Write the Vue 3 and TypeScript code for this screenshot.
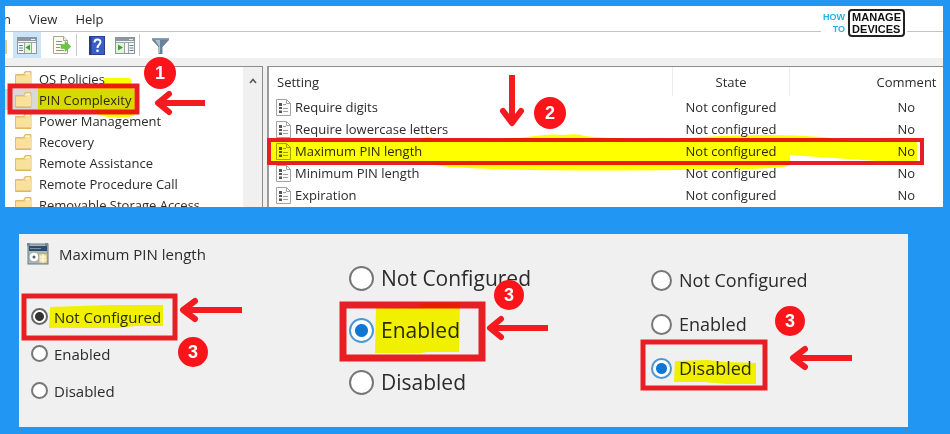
<script setup lang="ts">
import { reactive, ref } from 'vue'

interface Policy {
  name: string
  state: string
  comment: string
}

interface RadioSet {
  id: string
  title?: string
}

const folders: string[] = [
  'OS Policies',
  'PIN Complexity',
  'Power Management',
  'Recovery',
  'Remote Assistance',
  'Remote Procedure Call',
  'Removable Storage Access',
]
const selectedFolder = ref('PIN Complexity')

const policies: Policy[] = [
  { name: 'Require digits', state: 'Not configured', comment: 'No' },
  { name: 'Require lowercase letters', state: 'Not configured', comment: 'No' },
  { name: 'Maximum PIN length', state: 'Not configured', comment: 'No' },
  { name: 'Minimum PIN length', state: 'Not configured', comment: 'No' },
  { name: 'Expiration', state: 'Not configured', comment: 'No' },
]

const options: string[] = ['Not Configured', 'Enabled', 'Disabled']
const radioSets: RadioSet[] = [
  { id: 'small', title: 'Maximum PIN length' },
  { id: 'large' },
  { id: 'medium' },
]
const choice = reactive<Record<string, string>>({
  small: 'Not Configured',
  large: 'Enabled',
  medium: 'Disabled',
})
</script>

<template>
  <main class="page">
    <section class="card editor">
      <nav class="menu">
        <button type="button" class="cut">n</button>
        <button type="button">View</button>
        <button type="button">Help</button>
      </nav>
      <div class="logo">
        <div class="logo-how"><span>HOW</span><span>TO</span></div>
        <div class="logo-box"><span>MANAGE</span><span>DEVICES</span></div>
      </div>

      <div class="toolbar">
        <span class="sliver"></span>
        <button type="button" class="tool active" aria-label="Show or hide tree">
          <svg width="20" height="18" viewBox="0 0 20 18">
            <rect x="0.5" y="1.5" width="19" height="16" fill="#f4f6f6" stroke="#8b969c" />
            <rect x="1" y="2" width="18" height="3" fill="#8b98a3" />
            <path d="M14 3.5h4" stroke="#e8eef2" />
            <path d="M1 6.5h18M7.5 7v10M14.5 7v10" stroke="#9ba5aa" />
            <path d="M2 9.5h4M2 12h4M2 14.5h4" stroke="#6d7f90" />
            <rect x="8" y="7" width="6" height="10" fill="#e4f3da" />
            <path d="M13 8.500v6L8.500 11.500z" fill="#3ba32d" />
          </svg>
        </button>
        <button type="button" class="tool gap" aria-label="Export list">
          <svg width="20" height="20" viewBox="0 0 20 20">
            <path d="M1.500 1.500h10l4 4v13h-14z" fill="#fdfaee" stroke="#a8a596" />
            <path d="M11.500 1.500v4h4" fill="#eee" stroke="#a8a596" />
            <path d="M4 6.500h6M4 9.500h5M4 12.500h4M4 15.500h8" stroke="#8f9187" />
            <path d="M9 9.500h4V6.500l6 5-6 5v-3H9z" fill="#69c744" stroke="#4fae31" stroke-width="0.5" />
          </svg>
        </button>
        <span class="sep"></span>
        <button type="button" class="tool" aria-label="Help">
          <svg width="16" height="19" viewBox="0 0 16 19">
            <rect x="0.5" y="0.5" width="15" height="18" fill="#3a5fc4" stroke="#2a3f91" />
            <path d="M1.500 1v17" stroke="#23367f" stroke-width="2" />
            <path d="M5.500 6.500c0-4 6-4 6-.5 0 2.500-3 2.500-3 6" fill="none" stroke="#fff" stroke-width="2" />
            <circle class="dot" cx="8.500" cy="14.800" r="1.300" fill="#fff" />
          </svg>
        </button>
        <button type="button" class="tool" aria-label="Show or hide action pane">
          <svg width="20" height="18" viewBox="0 0 20 18">
            <rect x="0.5" y="1.5" width="19" height="16" fill="#f4f6f6" stroke="#8b969c" />
            <rect x="1" y="2" width="18" height="3" fill="#8b98a3" />
            <path d="M14 3.500h4" stroke="#e8eef2" />
            <path d="M1 6.500h18M9.500 7v10M13.500 7v10" stroke="#9ba5aa" />
            <path d="M14.500 9.500h4M14.500 12h4M14.500 14.500h4" stroke="#6d7f90" />
            <rect x="1" y="7" width="8" height="10" fill="#e4f3da" />
            <path d="M3 8.500v6l5-3z" fill="#3ba32d" />
          </svg>
        </button>
        <span class="sep"></span>
        <button type="button" class="tool" aria-label="Filter">
          <svg width="19" height="19" viewBox="0 0 19 19">
            <path d="M1 2h17v2l-6.500 7v7h-4v-7L1 4z" fill="#668397" />
            <path d="M4 4h5v13H8v-7z" fill="#a9c0ce" />
            <path d="M1 2h17v1.500H1z" fill="#8ba3b2" />
          </svg>
        </button>
      </div>

      <div class="panes">
        <div class="tree">
          <ul>
            <li v-for="folder in folders" :key="folder">
              <button
                type="button"
                class="folder"
                :class="{ selected: folder === selectedFolder }"
                @click="selectedFolder = folder"
              >
                <svg width="17" height="16" viewBox="0 0 17 16">
                  <path d="M.5 3.500h8l1.500-3h6v15H.5z" fill="#efcf7f" stroke="#dfbd6d" />
                  <path d="M11 1.500h4v2h-5z" fill="#fff5d6" />
                  <path d="M1 5h9.500l1-1.500H16V15H1z" fill="#f9e09c" />
                  <path d="M1 15h15" stroke="#d5b465" />
                </svg>
                <span>{{ folder }}</span>
              </button>
            </li>
          </ul>
          <div class="scroll">
            <svg width="8" height="6" viewBox="0 0 8 6">
              <path d="M1 5l3-3.500L7 5" fill="none" stroke="#555" stroke-width="1.5" />
            </svg>
          </div>
        </div>

        <div class="list">
          <table>
            <thead>
              <tr>
                <th class="name">Setting</th>
                <th class="state">State</th>
                <th class="comment">Comment</th>
              </tr>
            </thead>
            <tbody>
              <tr v-for="policy in policies" :key="policy.name">
                <td class="name">
                  <div class="policy">
                    <svg width="15" height="17" viewBox="0 0 15 17">
                      <path d="M.5.5h10l4 4v12H.5z" fill="#fbfbfb" stroke="#a3a3a3" />
                      <path d="M10.500.5v4h4" fill="none" stroke="#a3a3a3" />
                      <path d="M3 4h3v3H3zM3 8h3v2H3zM3 11.500h3v2.500H3z" fill="#555" />
                      <path d="M7 5.500h3M7 9.500h5M7 12.500h5" stroke="#a0a0a0" />
                    </svg>
                    <span>{{ policy.name }}</span>
                  </div>
                </td>
                <td class="state">{{ policy.state }}</td>
                <td class="comment">{{ policy.comment }}</td>
              </tr>
            </tbody>
          </table>
        </div>
      </div>

      <svg class="marks" viewBox="5 6 938 201" preserveAspectRatio="xMinYMin meet" aria-hidden="true">
        <g class="frame">
          <rect x="10" y="86" width="127" height="26" stroke-width="5" />
          <rect x="269" y="140" width="653" height="23" stroke-width="4" />
        </g>
        <g class="arrow">
          <path class="shaft" d="M205 103H160" />
          <path d="M169 94l-11 9 11 9" />
          <path class="shaft" d="M512 75v46" />
          <path d="M503 111l9 12 9-12" />
        </g>
        <circle cx="160" cy="73" r="16" />
        <text x="160" y="79">1</text>
        <circle cx="550" cy="113" r="16" />
        <text x="550" y="119">2</text>
      </svg>
      <svg class="marks ink" viewBox="5 6 938 201" preserveAspectRatio="xMinYMin meet" aria-hidden="true">
        <path d="M104 78h25q2 0 2 3v6l4 3v19l-1 7q-18 4-36-1l-3-6H38V88h66z" />
        <path
          d="M271 142h125l26 0q1-6 8-5l4 2q40 1 86-1 30-5 44-3 14-2 20 1 66 6 118 1 70-4 120 0l30 4 65 1v19l-8 3-32-3-87-6v10q-6 4-60 4-180 4-280-2l-40-5H271z"
        />
      </svg>
    </section>

    <section class="card dialog">
      <fieldset v-for="set in radioSets" :key="set.id" :class="set.id">
        <legend v-if="set.title" class="title">
          <svg width="22" height="22" viewBox="0 0 22 22">
            <rect x="1" y="1" width="20" height="20" fill="#a9b9bb" stroke="#667b84" />
            <path d="M0 0h3v3H0zM18 0h3v3h-3z" fill="#73899a" />
            <rect x="2" y="3" width="18" height="5" fill="#304b67" />
            <path d="M3 5.500h11" stroke="#7793ab" />
            <circle class="dot" cx="7" cy="14" r="5" fill="#fff" stroke="#93a3a7" />
            <circle class="dot" cx="7" cy="14" r="1.500" fill="#4f606b" />
            <rect x="12" y="11" width="8" height="9" fill="#f5dfa9" stroke="#ad9a6b" stroke-width="0.5" />
            <path d="M13 14h6M13 17h6M16 11v9" stroke="#fff9e4" />
          </svg>
          <span>{{ set.title }}</span>
        </legend>
        <label v-for="option in options" :key="option">
          <input v-model="choice[set.id]" type="radio" :name="set.id" :value="option" />
          <span>{{ option }}</span>
        </label>
      </fieldset>

      <svg class="marks" viewBox="19 234 889 193" preserveAspectRatio="xMinYMin meet" aria-hidden="true">
        <g class="frame">
          <rect x="24" y="296" width="151" height="42" stroke-width="5" />
          <rect x="343" y="305" width="139" height="53" stroke-width="7" />
          <rect x="643" y="342" width="122" height="46" stroke-width="5" />
        </g>
        <g class="arrow">
          <path class="shaft" d="M242 310h-57" />
          <path d="M195 301l-12 9 12 9" />
          <path class="shaft" d="M548 328h-57" />
          <path d="M501 319l-11 9 11 9" />
          <path class="shaft" d="M852 358h-57" />
          <path d="M805 349l-12 9 12 9" />
        </g>
        <circle cx="193" cy="352" r="15" />
        <text x="193" y="358">3</text>
        <circle cx="509" cy="295" r="15" />
        <text x="509" y="301">3</text>
        <circle cx="790" cy="321" r="15" />
        <text x="790" y="327">3</text>
      </svg>
      <svg class="marks ink" viewBox="19 234 889 193" preserveAspectRatio="xMinYMin meet" aria-hidden="true">
        <path d="M50 307l60-2h53v21l-26 0-20 2H49z" />
        <path d="M376 308l42-1 7-4h35l-1 49-32 0-6 1h-46z" />
        <path d="M675 361l32-1 20 2 29 1v21h-28l-24-2h-30z" />
      </svg>
    </section>
  </main>
</template>

<style>
body {
  margin: 0;
  background: #2196f3;
}
</style>

<style scoped>
.page {
  box-sizing: border-box;
  min-height: 100vh;
  padding: 6px 7px 7px 5px;
  overflow: hidden;
  background: #2196f3;
  color: #2b2b2b;
  font: 13px/20px "Open Sans", "Noto Sans", sans-serif;
}
.card {
  position: relative;
  background: #fff;
}
button {
  padding: 0;
  border: 0;
  background: none;
  color: inherit;
  font: inherit;
}
.menu {
  display: flex;
  gap: 18px;
  height: 25px;
  overflow: hidden;
  border-bottom: 1px solid #c4c4c4;
}
.cut {
  margin-left: -2px;
}
.logo {
  position: absolute;
  top: 3px;
  right: 36px;
  display: flex;
  gap: 3px;
  padding: 0 2px;
  background: #fff;
  font: bold 11px/12px "Liberation Sans", sans-serif;
}
.logo span {
  display: block;
}
.logo-how {
  padding-top: 2px;
  color: #21b4e6;
  font-size: 9px;
  text-align: right;
}
.logo-box {
  padding: 0 2px;
  border: 2px solid #222;
  border-radius: 4px;
  color: #111;
}
.toolbar {
  display: flex;
  align-items: stretch;
  height: 26px;
}
.sliver {
  width: 2px;
  margin: 8px 6px 4px 0;
  background: #e6c77c;
}
.tool {
  display: flex;
  align-items: center;
  justify-content: center;
  width: 28px;
}
.active {
  background: #cce4f7;
}
.gap {
  margin-left: 7px;
}
.sep {
  width: 1px;
  margin: 2px 6px 2px 0;
  background: #c8c8c8;
}
.panes {
  display: flex;
  gap: 4px;
  height: 141px;
  padding-top: 8px;
  background: #f0f0f0;
}
.tree {
  display: flex;
  width: 258px;
  box-sizing: border-box;
  overflow: hidden;
  border-top: 1px solid #8c8c8c;
  border-right: 1px solid #8c8c8c;
  background: #fff;
}
.tree ul {
  flex: 1;
  margin: 0;
  padding: 1px 0 0;
  list-style: none;
}
.folder {
  display: flex;
  gap: 7px;
  align-items: center;
  width: 129px;
  height: 21px;
  padding-left: 10px;
  white-space: nowrap;
}
.selected {
  background: #d9d9d9;
}
.folder svg,
.policy svg {
  flex: none;
}
.scroll {
  width: 19px;
  padding-top: 6px;
  background: #f0f0f0;
  line-height: 12px;
  text-align: center;
}
.list {
  flex: 1;
  overflow: hidden;
  border-top: 1px solid #8c8c8c;
  border-left: 2px solid #9a9a9a;
  background: #fff;
}
table {
  width: 100%;
  border-collapse: collapse;
  table-layout: fixed;
}
th {
  height: 29px;
  padding: 0;
  font-weight: normal;
}
td {
  height: 22px;
  padding: 0;
}
th.name {
  padding-left: 8px;
  text-align: left;
}
.state {
  width: 116px;
  text-align: center;
}
.comment {
  width: 73px;
  padding-left: 80px;
  text-align: center;
}
th.state {
  border-right: 1px solid #ececec;
  border-left: 1px solid #ececec;
}
.policy {
  display: flex;
  gap: 4px;
  align-items: center;
  padding-left: 7px;
}
.dialog {
  display: grid;
  grid-template-columns: 327fr 303fr 259fr;
  height: 193px;
  margin: 27px 35px 0 14px;
  background: #f0f0f0;
}
fieldset {
  min-width: 0;
  margin: 0;
  padding: 0;
  border: 0;
}
.title {
  display: flex;
  gap: 10px;
  align-items: center;
  height: 40px;
  margin-bottom: 24px;
  padding: 0 0 0 8px;
  font-size: 15px;
}
label {
  display: flex;
  align-items: center;
}
input {
  box-sizing: border-box;
  margin: 0;
  appearance: none;
  border: 2px solid #777;
  border-radius: 50%;
  background: #fff;
}
.small label {
  gap: 6px;
  height: 37px;
  padding-left: 12px;
  font-size: 15px;
}
.small input {
  width: 17px;
  height: 17px;
}
.small input:checked {
  border-color: #666;
  background: radial-gradient(circle, #333 4px, #fff 5px);
}
.large {
  padding-top: 18px;
}
.large label {
  gap: 7px;
  height: 52px;
  padding-left: 3px;
  font-size: 21px;
}
.large input {
  width: 25px;
  height: 25px;
}
.large input:checked {
  border-color: #4a97d6;
  background: radial-gradient(circle, #0f77d2 6px, #fff 7px);
}
.medium {
  padding-top: 24px;
}
.medium label {
  gap: 7px;
  height: 44px;
  padding-left: 2px;
  font-size: 18px;
}
.medium input {
  width: 21px;
  height: 21px;
}
.medium input:checked {
  border-color: #4a97d6;
  background: radial-gradient(circle, #0f77d2 5px, #fff 6px);
}
.marks {
  position: absolute;
  inset: 0;
  width: 100%;
  height: 100%;
  overflow: visible;
  pointer-events: none;
}
.ink {
  mix-blend-mode: multiply;
  fill: #ff0;
}
.frame {
  fill: none;
  stroke: #e81e25;
  stroke-linejoin: miter;
}
.arrow {
  fill: none;
  stroke: #f31b20;
  stroke-width: 6px;
  stroke-linecap: round;
  stroke-linejoin: round;
}
.arrow .shaft {
  stroke-width: 6px;
  stroke-linecap: butt;
}
.marks circle {
  fill: #fb1419;
}
.marks text {
  fill: #fff;
  font: bold 18px "Liberation Sans", sans-serif;
  text-anchor: middle;
}
</style>
